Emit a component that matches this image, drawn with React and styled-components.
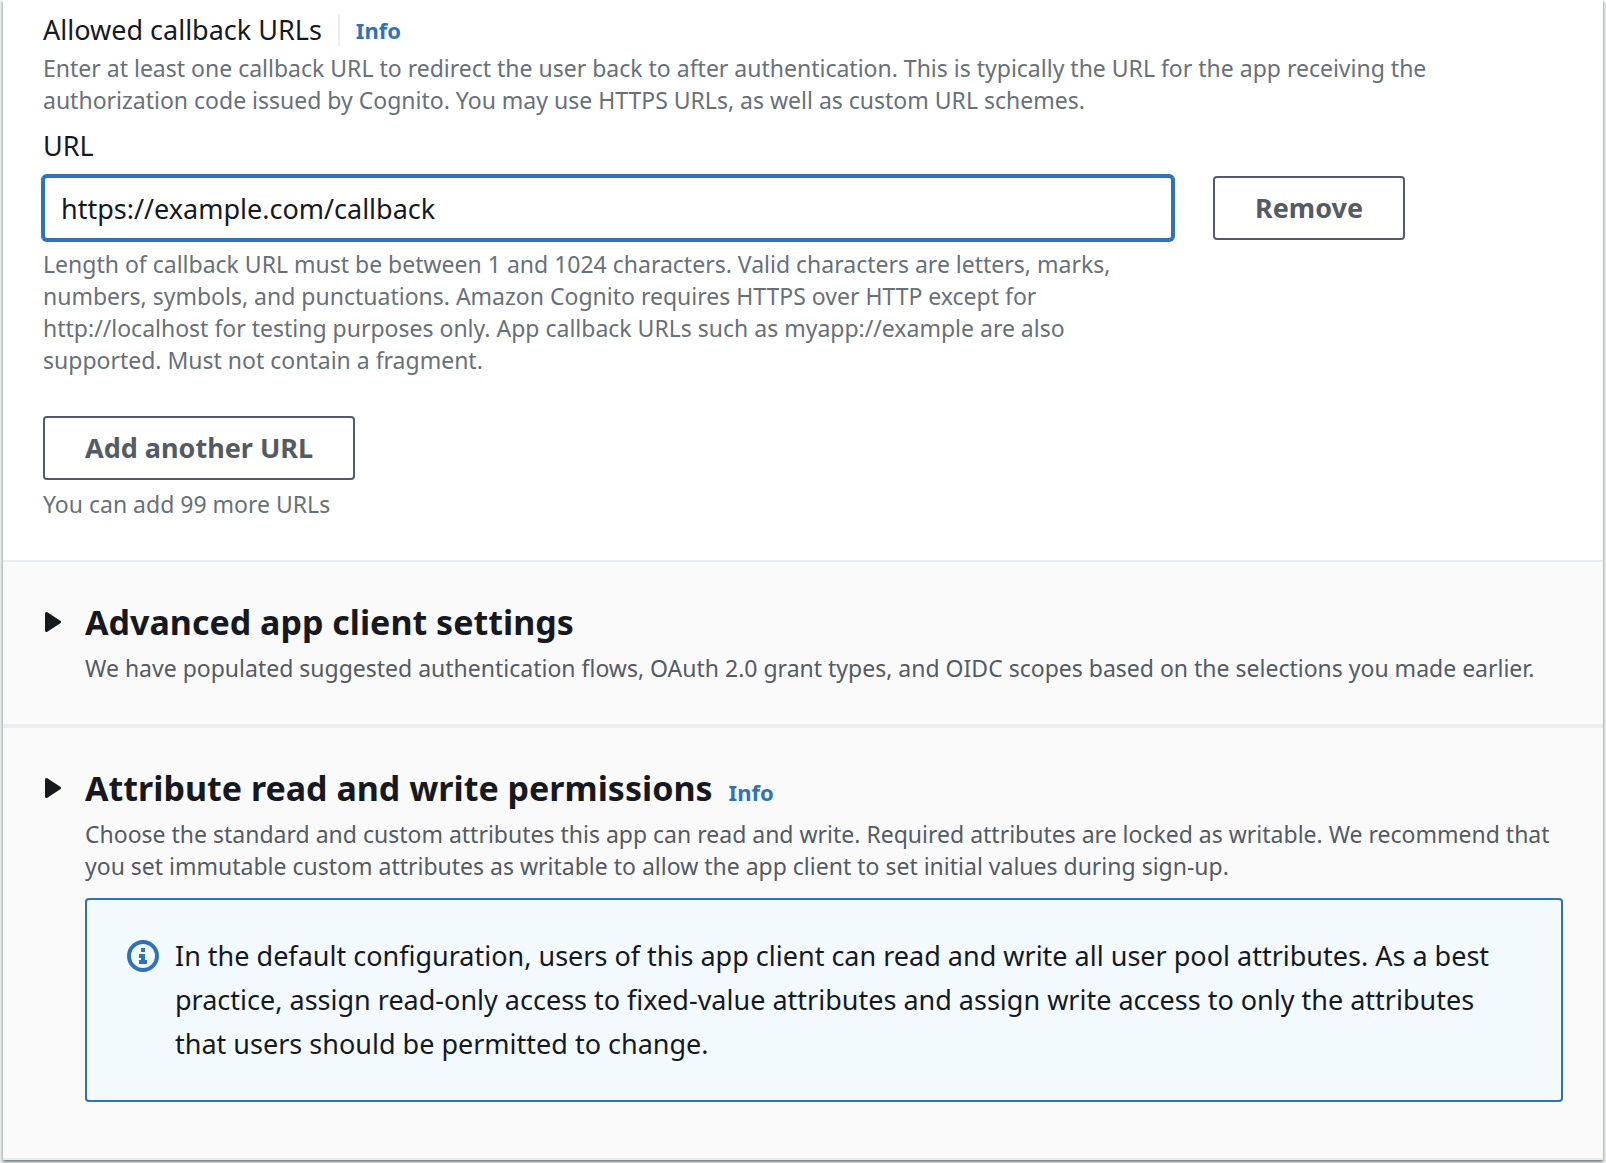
import React, { useState } from 'react';
import styled, { createGlobalStyle } from 'styled-components';

const GlobalStyle = createGlobalStyle`
  *, *::before, *::after {
    box-sizing: border-box;
  }

  body {
    margin: 0;
    background-color: #f2f3f3;
    color: #16191f;
    font-family: 'Noto Sans', 'Open Sans', sans-serif;
    font-size: 27px;
    line-height: 44px;
  }
`;

const Panel = styled.main`
  margin: 0 3px 3px;
  background-color: #ffffff;
  border-bottom: 2px solid #eaeded;
  box-shadow:
    0 2px 2px 0 rgba(0, 28, 36, 0.3),
    2px 2px 2px 0 rgba(0, 28, 36, 0.15),
    -2px 2px 2px 0 rgba(0, 28, 36, 0.15);
`;

const CallbackSection = styled.section`
  padding: 8px 40px 40px;
`;

const LabelRow = styled.div`
  display: flex;
  align-items: center;
  gap: 16px;
`;

const Title = styled.h3`
  margin: 0;
  font-size: 27px;
  font-weight: 400;
  line-height: 44px;
`;

const Separator = styled.span`
  width: 2px;
  height: 32px;
  background-color: #eaeded;
`;

const InfoLink = styled.a`
  color: #2e73b8;
  font-size: 22px;
  font-weight: 700;
  line-height: 32px;
  text-decoration: none;

  &:hover {
    text-decoration: underline;
  }
`;

const Hint = styled.p`
  margin: 0;
  color: ${props => props.$dark ? '#545b64' : '#687078'};
  font-size: 23px;
  line-height: 32px;
`;

const FieldLabel = styled.label`
  display: block;
  margin: 8px 0;
`;

const FieldRow = styled.div`
  display: grid;
  grid-template-columns: calc(75% - 10px) 1fr;
  column-gap: 40px;
  align-items: start;
  justify-items: start;
  margin-bottom: 40px;
`;

const Field = styled.div`
  display: grid;
  gap: 8px;
  width: 100%;
`;

const UrlInput = styled.input`
  width: 100%;
  height: 64px;
  padding: 0 16px;
  border: 2px solid #2e73b8;
  border-radius: 4px;
  outline: none;
  box-shadow: 0 0 0 2px #2e73b8;
  background-color: #ffffff;
  color: #16191f;
  font: inherit;
`;

const Button = styled.button`
  height: 64px;
  padding: 0 40px;
  border: 2px solid #545b64;
  border-radius: 4px;
  background-color: #ffffff;
  color: #545b64;
  font-family: inherit;
  font-size: 27px;
  font-weight: 700;
  line-height: 44px;
  cursor: pointer;

  &:hover {
    background-color: #fafafa;
    color: #16191f;
  }
`;

const AddHint = styled(Hint)`
  margin-top: 8px;
`;

const Expandable = styled.section`
  display: flex;
  gap: 24px;
  padding: ${props => props.$last ? '40px 40px 56px' : '40px'};
  border-top: ${props => props.$last ? '4px' : '2px'} solid #eaeded;
  background-color: #fafafa;
`;

const Toggle = styled.button`
  display: flex;
  align-items: center;
  flex-shrink: 0;
  width: 18px;
  height: 40px;
  padding: 0;
  border: none;
  background: none;
  color: #16191f;
  cursor: pointer;
`;

const ExpandableBody = styled.div`
  flex: 1;
  min-width: 0;
`;

const HeadingRow = styled.div`
  display: flex;
  align-items: baseline;
  gap: 16px;
  height: 40px;
  margin-bottom: 10px;
`;

const Heading = styled.h2`
  margin: 0;
  font-size: 34px;
  font-weight: 700;
  line-height: 40px;
`;

const Alert = styled.div`
  display: flex;
  gap: 16px;
  margin-top: 16px;
  padding: 34px 40px;
  border: 2px solid #2e73b8;
  border-radius: 4px;
  background-color: #f2fafd;
`;

const AlertIcon = styled.svg`
  flex-shrink: 0;
  width: 32px;
  height: 32px;
  margin-top: 6px;
`;

const AlertText = styled.p`
  margin: 0;
`;

const Caret = () => (
  <svg width="18" height="20" viewBox="0 0 18 20" aria-hidden="true">
    <path
      d="M3.5 1.5 L16.5 10 L3.5 18.5 Z"
      fill="currentColor"
      stroke="currentColor"
      strokeWidth="3"
      strokeLinejoin="round"
    />
  </svg>
);

const InfoIcon = () => (
  <AlertIcon viewBox="0 0 32 32" aria-hidden="true">
    <circle cx="16" cy="16" r="14" fill="none" stroke="#2e73b8" strokeWidth="4" />
    <path d="M14 8h4v4h-4z M12 14h6v6h2v4h-8v-4h2v-2h-2z" fill="#2e73b8" />
  </AlertIcon>
);

const ExpandableSection = ({ title, info, description, last, children }) => {
  const [open, setOpen] = useState(false);

  return (
    <Expandable $last={last}>
      <Toggle type="button" aria-label={title} aria-expanded={open} onClick={() => setOpen(!open)}>
        <Caret />
      </Toggle>
      <ExpandableBody>
        <HeadingRow>
          <Heading>{title}</Heading>
          {info && <InfoLink href="#attributes">Info</InfoLink>}
        </HeadingRow>
        <Hint $dark>{description}</Hint>
        {children}
      </ExpandableBody>
    </Expandable>
  );
};

const App = () => {
  const [url, setUrl] = useState('https://example.com/callback');

  return (
    <>
      <GlobalStyle />
      <Panel>
        <CallbackSection>
          <LabelRow>
            <Title>Allowed callback URLs</Title>
            <Separator />
            <InfoLink href="#callback-urls">Info</InfoLink>
          </LabelRow>
          <Hint>
            Enter at least one callback URL to redirect the user back to after authentication. This is
            typically the URL for the app receiving the authorization code issued by Cognito. You may use
            HTTPS URLs, as well as custom URL schemes.
          </Hint>
          <FieldLabel htmlFor="callback-url">URL</FieldLabel>
          <FieldRow>
            <Field>
              <UrlInput
                id="callback-url"
                type="text"
                value={url}
                onChange={(e) => setUrl(e.target.value)}
              />
              <Hint>
                Length of callback URL must be between 1 and 1024 characters. Valid characters are letters,
                marks, numbers, symbols, and punctuations. Amazon Cognito requires HTTPS over HTTP except for
                http://localhost for testing purposes only. App callback URLs such as myapp://example are also
                supported. Must not contain a fragment.
              </Hint>
            </Field>
            <Button type="button" onClick={() => setUrl('')}>Remove</Button>
          </FieldRow>
          <Button type="button">Add another URL</Button>
          <AddHint>You can add 99 more URLs</AddHint>
        </CallbackSection>

        <ExpandableSection
          title="Advanced app client settings"
          description="We have populated suggested authentication flows, OAuth 2.0 grant types, and OIDC scopes based on the selections you made earlier."
        />

        <ExpandableSection
          title="Attribute read and write permissions"
          info
          last
          description="Choose the standard and custom attributes this app can read and write. Required attributes are locked as writable. We recommend that you set immutable custom attributes as writable to allow the app client to set initial values during sign-up."
        >
          <Alert>
            <InfoIcon />
            <AlertText>
              In the default configuration, users of this app client can read and write all user pool
              attributes. As a best practice, assign read-only access to fixed-value attributes and assign
              write access to only the attributes that users should be permitted to change.
            </AlertText>
          </Alert>
        </ExpandableSection>
      </Panel>
    </>
  );
};

export default App;
